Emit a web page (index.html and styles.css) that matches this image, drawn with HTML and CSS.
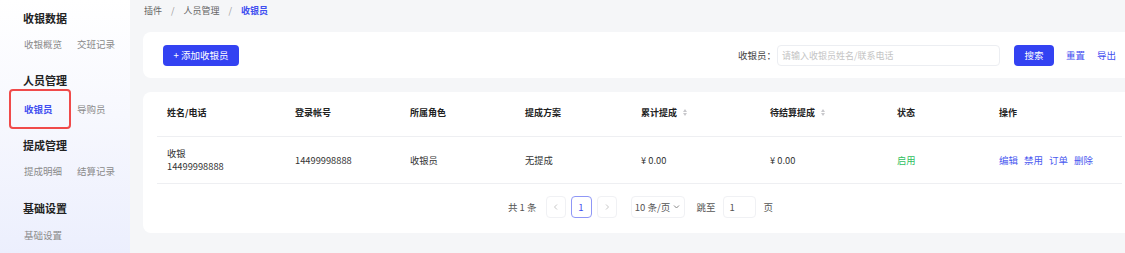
FILE: index.html
```html
<!DOCTYPE html>
<html lang="zh">
<head>
<meta charset="utf-8">
<link rel="stylesheet" href="styles.css">
</head>
<body>
<div class="app">
  <aside class="sidebar">
    <div class="group g1">
      <div class="group-title">收银数据</div>
      <div class="group-items"><span class="item">收银概览</span><span class="item">交班记录</span></div>
    </div>
    <div class="group g2">
      <div class="group-title">人员管理</div>
      <div class="group-items"><span class="item active">收银员</span><span class="item">导购员</span></div>
    </div>
    <div class="group g3">
      <div class="group-title">提成管理</div>
      <div class="group-items"><span class="item">提成明细</span><span class="item">结算记录</span></div>
    </div>
    <div class="group g4">
      <div class="group-title">基础设置</div>
      <div class="group-items"><span class="item">基础设置</span></div>
    </div>
  </aside>
  <main class="main">
    <nav class="crumbs"><span>插件</span><span class="sep">/</span><span>人员管理</span><span class="sep">/</span><span class="cur">收银员</span></nav>
    <section class="card toolbar">
      <button class="btn-primary add">+ 添加收银员</button>
      <div class="filters">
        <label class="flabel">收银员：</label>
        <div class="input">请输入收银员姓名/联系电话</div>
        <button class="btn-primary search">搜索</button>
        <a class="link">重置</a>
        <a class="link">导出</a>
      </div>
    </section>
    <section class="card tablecard">
      <div class="trow thead">
        <div class="c c1">姓名/电话</div>
        <div class="c c2">登录帐号</div>
        <div class="c c3">所属角色</div>
        <div class="c c4">提成方案</div>
        <div class="c c5">累计提成<span class="sort"><i class="up"></i><i class="down"></i></span></div>
        <div class="c c6">待结算提成<span class="sort"><i class="up"></i><i class="down"></i></span></div>
        <div class="c c7">状态</div>
        <div class="c c8">操作</div>
      </div>
      <div class="trow tbody">
        <div class="c c1"><div>收银</div><div>14499998888</div></div>
        <div class="c c2">14499998888</div>
        <div class="c c3">收银员</div>
        <div class="c c4">无提成</div>
        <div class="c c5">¥ 0.00</div>
        <div class="c c6">¥ 0.00</div>
        <div class="c c7 on">启用</div>
        <div class="c c8 ops"><a>编辑</a><a>禁用</a><a>订单</a><a>删除</a></div>
      </div>
      <div class="pager">
        <span class="total">共 1 条</span>
        <span class="pbtn">
          <svg width="8" height="8" viewBox="0 0 8 8"><path d="M5 1.5 2.5 4 5 6.5" fill="none" stroke="#c8c8c8" stroke-width="1"/></svg>
        </span>
        <span class="pbtn cur">1</span>
        <span class="pbtn">
          <svg width="8" height="8" viewBox="0 0 8 8"><path d="M3 1.5 5.5 4 3 6.5" fill="none" stroke="#c8c8c8" stroke-width="1"/></svg>
        </span>
        <span class="psize">10 条/页
          <svg width="7" height="6" viewBox="0 0 7 6"><path d="M1 1.5 3.5 4 6 1.5" fill="none" stroke="#888" stroke-width="1"/></svg>
        </span>
        <span class="jump">跳至</span>
        <span class="pinput">1</span>
        <span class="jump">页</span>
      </div>
    </section>
  </main>
</div>
</body>
</html>
```
FILE: styles.css
```css
* { box-sizing: border-box; }
html, body { margin: 0; padding: 0; }
body {
  width: 1125px;
  height: 253px;
  overflow: hidden;
  font-family: "Noto Sans CJK SC", "Noto Sans", sans-serif;
  font-size: 10px;
  color: #333;
  background: #f5f6f8;
}
.app { display: flex; height: 253px; }

.sidebar {
  width: 130px;
  flex: none;
  background: linear-gradient(180deg, #ffffff 0%, #f7f8fe 45%, #eceffd 100%);
  padding-top: 9px;
}
.group { display: flex; flex-direction: column; }
.group-title {
  padding-left: 23px;
  font-size: 11px;
  font-weight: 700;
  color: #222;
  line-height: 18px;
}
.group-items {
  display: flex;
  padding-left: 9px;
}
.item {
  width: 62px;
  height: 30px;
  line-height: 26px;
  padding-left: 13px;
  font-size: 9.5px;
  color: #8a8a8a;
  border: 2px solid transparent;
  border-radius: 4px;
}
.item + .item { width: auto; padding-left: 4px; }
.item.active {
  color: #3f4ef0;
  font-weight: 700;
  border-color: #f04a4a;
}
.g1 .group-items { margin-top: 2px; }
.g2 { margin-top: 12px; }
.g2 .item { height: 40px; line-height: 36px; }
.g3 { margin-top: 7px; }
.g3 .group-items { margin-top: 2px; }
.g4 { margin-top: 13px; }
.g4 .group-items { margin-top: 3px; }

.main {
  flex: 1;
  padding-left: 13px;
  display: flex;
  flex-direction: column;
}
.crumbs {
  height: 22px;
  display: flex;
  align-items: center;
  padding-left: 1px;
  padding-bottom: 1px;
  font-size: 9px;
  color: #666;
}
.crumbs .sep { margin: 0 9px; color: #999; }
.crumbs .cur { color: #3f4ef0; font-weight: 700; }

.card {
  background: #fff;
  border-radius: 8px 0 0 8px;
}
.toolbar {
  margin-top: 10px;
  height: 46px;
  display: flex;
  align-items: center;
  justify-content: space-between;
  padding: 0 9px 0 20px;
}
.btn-primary {
  border: none;
  background: #3342f2;
  color: #fff;
  border-radius: 4px;
  font-family: inherit;
  font-size: 9.5px;
  height: 21px;
  padding: 0;
}
.add { width: 76px; }
.filters { display: flex; align-items: center; }
.flabel { font-size: 9.5px; color: #444; margin-right: 1px; }
.input {
  width: 223px;
  height: 21px;
  border: 1px solid #eceef2;
  border-radius: 4px;
  padding-left: 4px;
  line-height: 19px;
  font-size: 9px;
  color: #c4c4c4;
}
.search { width: 40px; margin-left: 14px; }
.link { color: #3f4ef0; font-size: 9.5px; }
.search + .link { margin-left: 12px; }
.link + .link { margin-left: 12px; }

.tablecard {
  margin-top: 14px;
  height: 141px;
  padding: 0 3px 0 14px;
  display: flex;
  flex-direction: column;
  font-size: 9.3px;
}
.trow { display: flex; align-items: center; border-bottom: 1px solid #eeeff2; }
.thead { height: 45px; font-weight: 700; color: #222; font-size: 9px; padding-bottom: 3px; }
.tbody { height: 47px; }
.c { padding-left: 10px; }
.c1 { width: 128px; }
.c2 { width: 115px; }
.c3 { width: 115px; }
.c4 { width: 116px; }
.c5 { width: 129px; display: flex; align-items: center; }
.c6 { width: 127px; display: flex; align-items: center; }
.c7 { width: 102px; }
.c8 { flex: 1; }
.tbody .c1 { line-height: 13px; }
.on { color: #2fbf62; }
.ops { display: flex; gap: 6px; font-size: 9.5px; }
.ops a { color: #4a59f0; }
.sort { display: inline-flex; flex-direction: column; gap: 1px; margin-left: 6px; }
.sort i { width: 0; height: 0; border-left: 2.5px solid transparent; border-right: 2.5px solid transparent; }
.sort .up { border-bottom: 3px solid #c8c8cc; }
.sort .down { border-top: 3px solid #c8c8cc; }

.pager {
  flex: 1;
  display: flex;
  align-items: center;
  justify-content: center;
  padding-left: 2px;
  padding-bottom: 3px;
  color: #555;
  font-size: 9.5px;
}
.total { margin-right: 9px; }
.pbtn {
  width: 20px;
  height: 22px;
  border: 1px solid #f0f1f4;
  border-radius: 4px;
  display: flex;
  align-items: center;
  justify-content: center;
  margin-right: 5px;
}
.pbtn.cur { width: 21px; border-color: #8f97f6; color: #3f4ef0; }
.psize {
  margin-left: 9px;
  width: 54px;
  height: 22px;
  border: 1px solid #f0f1f4;
  border-radius: 4px;
  display: flex;
  align-items: center;
  justify-content: center;
  gap: 3px;
}
.jump { margin: 0 7px 0 12px; }
.pinput {
  width: 33px;
  height: 22px;
  border: 1px solid #f0f1f4;
  border-radius: 4px;
  padding-left: 6px;
  display: flex;
  align-items: center;
}
.pinput + .jump { margin-left: 8px; margin-right: 0; }
```
